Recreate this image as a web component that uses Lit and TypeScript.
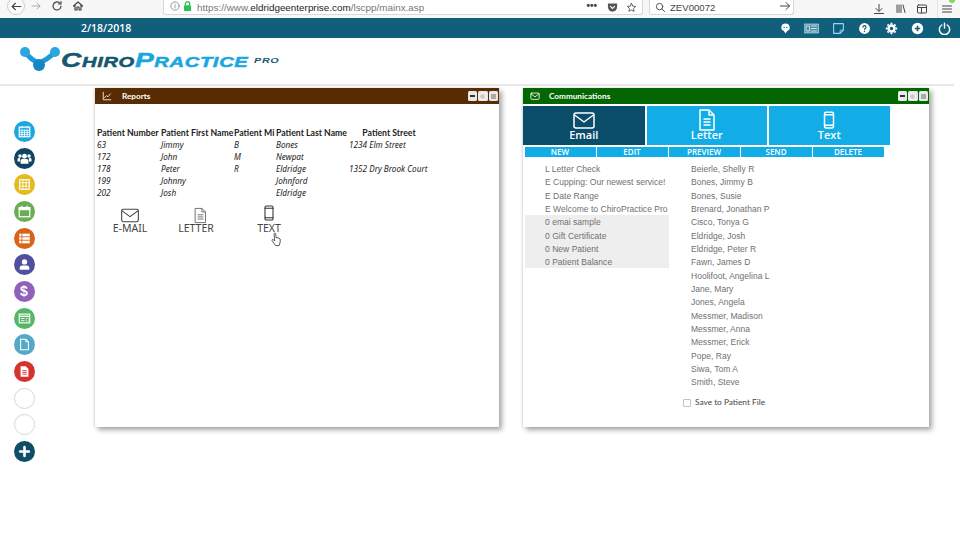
import { LitElement, html, css, svg } from "lit";
import { customElement } from "lit/decorators.js";

const ic = (body: unknown, size = 16, sw = 2) => html`<svg width=${size} height=${size} viewBox="0 0 24 24" fill="none" stroke="currentColor" stroke-width=${sw} stroke-linecap="round" stroke-linejoin="round">${body}</svg>`;

const mail = svg`<rect x="2" y="5" width="20" height="15" rx="2"/><path d="M2.500 7l9.500 7 9.500-7"/>`;
const doc = svg`<path d="M5 2h9l5 5v15H5z"/><path d="M14 2v5h5M8.500 11h7M8.500 14h7M8.500 17h7"/>`;
const phone = svg`<rect x="6" y="1.500" width="12" height="21" rx="2"/><path d="M6 5h12M6 19h12"/>`;

const sideIcons = [
  { c: "#1ba7dd", i: svg`<rect x="6" y="7" width="12" height="11" fill="none" stroke="#fff" stroke-width="1.400"/><path d="M6 10.500h12M6 13h12M6 15.500h12M9 10v8M12 10v8M15 10v8M9 5.500v3M15 5.500v3" stroke="#fff" stroke-width="1"/>` },
  { c: "#0f4560", i: svg`<circle cx="12" cy="9.500" r="2.800" fill="#fff"/><circle cx="6.800" cy="9" r="2" fill="#fff"/><circle cx="17.200" cy="9" r="2" fill="#fff"/><path d="M7.500 18v-3.500q0-2 2-2h5q2 0 2 2V18z" fill="#fff"/><path d="M4 15.500v-2.500q0-1.500 1.500-1.500H7v4zM20 15.500v-2.500q0-1.500-1.500-1.500H17v4z" fill="#fff"/>` },
  { c: "#e6b91f", i: svg`<rect x="6.500" y="6.500" width="11" height="11" fill="none" stroke="#fff" stroke-width="1.300"/><path d="M6.500 10h11M6.500 13.800h11M10.200 6.500v11M13.800 6.500v11" stroke="#fff" stroke-width="1"/>` },
  { c: "#69ad55", i: svg`<rect x="6" y="7.500" width="12" height="10.500" fill="none" stroke="#fff" stroke-width="1.400"/><path d="M6 8h12v2H6zM9 5.500v3M15 5.500v3" stroke="#fff" stroke-width="1.400" fill="#fff"/>` },
  { c: "#d9631b", i: svg`<rect x="6" y="6.500" width="12" height="11" fill="#fff"/><path d="M6 10h12M6 14h12M9 6.500v11" stroke="#d9631b" stroke-width="1"/>` },
  { c: "#514f9f", i: svg`<circle cx="12" cy="9" r="3" fill="#fff"/><path d="M6.500 18v-2q0-3 3-3h5q3 0 3 3v2z" fill="#fff"/>` },
  { c: "#8f61b8", t: "$" },
  { c: "#55b668", i: svg`<rect x="6" y="7" width="12" height="10" fill="none" stroke="#fff" stroke-width="1.300"/><path d="M6 9.500h12" stroke="#fff" stroke-width="1.500"/><path d="M8 12h4M8 14.500h4M14 12h2v3h-2z" stroke="#fff" stroke-width="1"/>` },
  { c: "#55a9c8", i: svg`<path d="M7.500 6h6l3 3v9h-9z" fill="none" stroke="#fff" stroke-width="1.300"/><path d="M13.500 6v3h3" stroke="#fff" stroke-width="1" fill="none"/>` },
  { c: "#d4332e", i: svg`<path d="M7.500 6h6l3 3v9h-9z" fill="#fff"/><path d="M9.500 11h5M9.500 13h5M9.500 15h5" stroke="#d4332e" stroke-width="1"/>` },
  { c: "", i: null },
  { c: "", i: null },
  { c: "#0f4d68", i: svg`<path d="M12 7v10M7 12h10" stroke="#fff" stroke-width="3" stroke-linecap="round"/>` },
];

const topIcons = [
  { s: 13, b: svg`<path d="M12 3a7.500 7 0 0 1 3 13.500L12 21l-3-4.500A7.500 7 0 0 1 12 3z" fill="#fff" stroke="none"/><circle cx="9.500" cy="10" r="1.300" fill="#125f7c" stroke="none"/><circle cx="14.500" cy="10" r="1.300" fill="#125f7c" stroke="none"/>` },
  { s: 15, b: svg`<rect x="1" y="5" width="22" height="14" stroke="#b5dce8" stroke-width="1.500" fill="#4d8aa1"/><path d="M4 8h5v8H4zM12 8h8M12 12h8M12 16h8" stroke="#d5ecf3" stroke-width="1.500"/>` },
  { s: 13, b: svg`<path d="M3 3h18v12l-6 6H3z" stroke="#8fdcf2" stroke-width="2"/><path d="M15 21v-6h6" stroke="#8fdcf2" stroke-width="1.500"/>` },
  { s: 13, b: svg`<circle cx="12" cy="12" r="10" fill="#fff" stroke="none"/><path d="M9.200 9.500a2.800 2.800 0 1 1 4.200 2.500c-1 .6-1.400 1-1.400 2" stroke="#125f7c" stroke-width="2.200"/><circle cx="12" cy="17.500" r="1.300" fill="#125f7c" stroke="none"/>` },
  { s: 13, b: svg`<path d="M12 6.500a5.500 5.500 0 1 0 0 11 5.500 5.500 0 0 0 0-11z" stroke="#fff" stroke-width="4.500"/><path d="M12 1.500v3M12 19.500v3M1.500 12h3M19.500 12h3M4.600 4.600l2.100 2.100M17.300 17.300l2.100 2.100M4.600 19.400l2.100-2.100M17.300 6.700l2.100-2.100" stroke="#fff" stroke-width="3.500" stroke-linecap="butt"/>` },
  { s: 13, b: svg`<circle cx="12" cy="12" r="10.500" fill="#fff" stroke="none"/><path d="M12 7v10M7 12h10" stroke="#125f7c" stroke-width="3" stroke-linecap="butt"/>` },
  { s: 13, b: svg`<path d="M7 5.500a9.500 9.500 0 1 0 10 0M12 2v9" stroke="#fff" stroke-width="2.600"/>` },
];

const rows = [
  ["63", "Jimmy", "B", "Bones", "1234 Elm Street"],
  ["172", "John", "M", "Newpat", ""],
  ["178", "Peter", "R", "Eldridge", "1352 Dry Brook Court"],
  ["199", "Johnny", "", "Johnford", ""],
  ["202", "Josh", "", "Eldridge", ""],
];
const templates = ["L Letter Check", "E Cupping: Our newest service!", "E Date Range", "E Welcome to ChiroPractice Pro"];
const shaded = ["0 emai sample", "0 Gift Certificate", "0 New Patient", "0 Patient Balance"];
const people = ["Beierle, Shelly R", "Bones, Jimmy B", "Bones, Susie", "Brenard, Jonathan P", "Cisco, Tonya G", "Eldridge, Josh", "Eldridge, Peter R", "Fawn, James D", "Hoolifoot, Angelina L", "Jane, Mary", "Jones, Angela", "Messmer, Madison", "Messmer, Anna", "Messmer, Erick", "Pope, Ray", "Siwa, Tom A", "Smith, Steve"];

@customElement("app-root")
export class AppRoot extends LitElement {
  static styles = css`
    :host { display: block; width: 960px; height: 540px; overflow: hidden; background: #fff; font-family: "Open Sans", sans-serif; color: #222; }
    * { box-sizing: border-box; }
    .chrome { height: 18px; background: #f7f7f7; display: flex; align-items: flex-end; color: #444; overflow: hidden; }
    .nav { width: 163px; height: 18px; display: flex; align-items: center; flex: none; padding-left: 7px; }
    .back { width: 18px; height: 18px; border-radius: 50%; border: 1px solid #cfcfcf; background: #fbfbfb; display: flex; align-items: center; justify-content: center; margin-top: -6px; }
    .nav svg { display: block; }
    .nav .fwd { margin-left: 5px; color: #aaa; margin-top: -7px; }
    .nav .rl { margin-left: 9px; margin-top: -7px; }
    .nav .hm { margin-left: 9px; margin-top: -7px; }
    .url { width: 480px; height: 15px; background: #fff; border: 1px solid #d8d8d8; border-top: 0; border-radius: 0 0 3px 3px; display: flex; align-items: center; font-family: "Liberation Sans", sans-serif; font-size: 9.900px; color: #777; flex: none; margin-bottom: 3px; padding-left: 6px; }
    .url b { font-weight: 400; color: #222; }
    .url .lock { margin: 0 5px 0 3px; color: #27c24c; }
    .url .info { color: #888; }
    .url .tools { margin-left: auto; display: flex; align-items: center; gap: 8px; padding-right: 5px; color: #555; }
    .dots { font-weight: 700; font-size: 10px; color: #444; margin-right: 2px; line-height: 10px; margin-top: -3px; }
    .search { width: 145px; height: 15px; margin: 0 0 3px 6px; background: #fff; border: 1px solid #d8d8d8; border-top: 0; border-radius: 0 0 3px 3px; display: flex; align-items: center; font-family: "Liberation Sans", sans-serif; font-size: 9.600px; color: #444; padding: 0 2px 0 5px; gap: 4px; flex: none; }
    .search .arr { margin-left: auto; color: #444; }
    .right { display: flex; align-items: center; height: 18px; margin-left: 79px; gap: 9.500px; color: #444; margin-top: -8px; flex: none; }
    .sep { width: 1px; height: 18px; background: #e3e3e3; margin-left: -1px; }
    .burger { position: relative; margin-left: -6px; }
    .burger::after { content: ""; position: absolute; right: -2px; top: -1px; width: 6px; height: 6px; border-radius: 50%; background: #7ed957; }
    .bar { height: 20px; background: #125f7c; color: #fff; display: flex; align-items: center; padding-left: 81px; font-size: 10.500px; font-weight: 600; }
    .bar .date { width: 691px; flex: none; }
    .bar .icons { display: flex; align-items: center; }
    .bar .slot { width: 26.500px; display: flex; justify-content: center; flex: none; }
    .head { height: 48px; display: flex; align-items: center; padding: 0 0 3px 19px; border-bottom: 2px solid #e8e8e8; margin-right: 6px; }
    .word { font-family: "Liberation Sans", sans-serif; font-weight: 700; font-style: italic; font-size: 21px; line-height: 24px; letter-spacing: 0.500px; font-variant: small-caps; -webkit-text-stroke: 0.500px currentColor; transform: scaleX(1.340); transform-origin: left center; width: 186px; flex: none; }
    .word .a { color: #15576f; }
    .word .b { color: #1aa7e0; }
    .pro { font-family: "Liberation Sans", sans-serif; font-weight: 700; font-style: italic; font-size: 8px; color: #15576f; letter-spacing: .5px; transform: scaleX(1.350); transform-origin: left center; margin-left: 7px; margin-top: 2px; }
    .main { display: grid; grid-template-columns: 95px 404px 24px 406px; height: 454px; padding-top: 2px; }
    .side { display: flex; flex-direction: column; padding: 33px 0 0 13.500px; gap: 5.670px; }
    .dot { width: 21px; height: 21px; border-radius: 50%; display: flex; align-items: center; justify-content: center; color: #fff; font-weight: 700; font-size: 14px; line-height: 21px; font-family: "Liberation Sans", sans-serif; flex: none; }
    .dot.empty { background: #fff; border: 1px solid #d6d6d6; }
    .win { height: 339px; background: #fff; box-shadow: 3px 3px 5px rgba(0,0,0,.35), -1px 0 2px rgba(0,0,0,.12); display: flex; flex-direction: column; }
    .title { height: 16px; display: flex; align-items: center; color: #fff; font-size: 8.200px; font-weight: 700; padding: 0 1px 0 7px; flex: none; font-family: Lato, sans-serif; }
    .title.brown { background: #5a2c04; }
    .title.green { background: #036603; }
    .title .t { margin-left: 10px; }
    .title.green .t { margin-left: 9px; }
    .ctl { margin-left: auto; display: flex; gap: 1px; }
    .ctl i { width: 9.500px; height: 10px; border-radius: 1.500px; background: #e9e9e9; display: flex; align-items: center; justify-content: center; }
    .ctl i.m::after { content: ""; width: 5px; height: 1.500px; background: #333; }
    .ctl i.r::after { content: ""; width: 5px; height: 5px; border-radius: 50%; border: 1px solid #fff; background: #ccc; }
    .ctl i.x::after { content: ""; width: 5px; height: 5px; background: #aaa; }
    .report { padding: 23px 0 0 2px; font-family: "Noto Sans", sans-serif; }
    table { border-collapse: collapse; table-layout: fixed; width: 332px; font-size: 8.200px; color: #222; }
    th { font-family: Lato, sans-serif; font-size: 8.700px; font-weight: 700; text-align: left; padding: 0; height: 12px; line-height: 12px; white-space: nowrap; }
    th.c { text-align: center; }
    td { font-style: italic; padding: 0; height: 12px; line-height: 12px; white-space: nowrap; }
    .acts { display: grid; grid-template-columns: 66px 66px 80px; margin-top: 8px; color: #444; }
    .act { display: flex; flex-direction: column; align-items: center; font-size: 10.500px; line-height: 12px; position: relative; }
    .box { height: 15px; display: flex; align-items: flex-end; justify-content: center; }
    .box svg { display: block; }
    .box.m svg { margin-bottom: -3px; }
    .box.d { margin-left: 8px; color: #666; }
    .box.d svg { margin-bottom: -2px; }
    .box.p { color: #333; margin-bottom: 1.500px; height: 13.500px; }
    .cursor { position: absolute; left: 42px; top: 25px; }
    .tabs { display: grid; grid-template-columns: 121.500px 120.500px 120.500px; gap: 0 2px; margin-top: 1.500px; height: 39.500px; flex: none; }
    .tab { background: #12ace6; color: #fff; display: flex; flex-direction: column; align-items: center; padding-top: 2px; font-size: 11px; font-weight: 600; line-height: 13px; }
    .tab.on { background: #0a4d6a; }
    .tab svg { display: block; height: 24px; margin-bottom: -4px; flex: none; }
    .subs { display: grid; grid-template-columns: repeat(5, 71px); gap: 0 1px; margin: 1.500px 0 0 1.500px; flex: none; }
    .sub { background: #12ace6; color: #fff; height: 10px; font-size: 8px; line-height: 10px; text-align: center; font-weight: 600; }
    .lists { display: grid; grid-template-columns: 168px 1fr; padding-top: 6.500px; font-family: "Liberation Sans", sans-serif; letter-spacing: .03px; font-size: 8.500px; color: #707070; line-height: 13.330px; }
    .tpl { padding-left: 2px; }
    .tpl div { height: 13.330px; white-space: nowrap; }
    .tpl .row { padding-left: 20px; }
    .tpl .shade { background: #eeeeee; width: 143.500px; height: 52.500px; margin-top: -1.300px; padding-top: 1.300px; }
    .ppl div { height: 13.330px; white-space: nowrap; }
    .ppl .save { display: flex; align-items: center; gap: 4px; margin-top: 6.500px; color: #444; height: 14px; letter-spacing: 0; font-family: Lato, sans-serif; font-size: 8.300px; }
    .check { width: 8px; height: 8px; border: 1px solid #c4c4c4; border-radius: 1px; background: #fff; margin-left: -8px; }
  `;

  render() {
    return html`
      <div class="chrome">
        <div class="nav">
          <span class="back">${ic(svg`<path d="M20 12H4M10 6l-6 6 6 6"/>`, 13)}</span>
          <span class="fwd">${ic(svg`<path d="M4 12h16M14 6l6 6-6 6"/>`, 12)}</span>
          <span class="rl">${ic(svg`<path d="M20 12a8 8 0 1 1-3-6.300M20 3v5h-5"/>`, 12, 2.400)}</span>
          <span class="hm">${ic(svg`<path d="M3 12l9-8 9 8M6 10v10h4v-6h4v6h4V10"/>`, 12, 2.400)}</span>
        </div>
        <div class="url">
          <span class="info">${ic(svg`<circle cx="12" cy="12" r="10"/><path d="M12 11v6M12 7v.5"/>`, 10)}</span>
          <span class="lock"><svg width="9" height="10" viewBox="0 0 12 14"><path d="M3 6V4a3 3 0 0 1 6 0v2" fill="none" stroke="currentColor" stroke-width="1.800"/><rect x="1" y="6" width="10" height="8" rx="1" fill="currentColor"/></svg></span>
          <span>https://www.<b>eldridgeenterprise.com</b>/lscpp/mainx.asp</span>
          <span class="tools">
            <span class="dots">•••</span>
            <svg width="11" height="11" viewBox="0 0 12 12"><path d="M1 1.500h10v4a5 5 0 0 1-10 0z" fill="#555"/><path d="M3.500 4.500L6 7l2.500-2.500" stroke="#fff" stroke-width="1.300" fill="none"/></svg>
            ${ic(svg`<path d="M12 3l2.800 5.900 6.200.8-4.500 4.400 1.100 6.400-5.600-3.100-5.600 3.100 1.100-6.400L3 9.700l6.200-.8z"/>`, 11)}
          </span>
        </div>
        <div class="search">
          ${ic(svg`<circle cx="10" cy="10" r="7"/><path d="M15 15l6 6"/>`, 11)}
          <span>ZEV00072</span>
          <span class="arr">${ic(svg`<path d="M3 12h18M14 5l7 7-7 7"/>`, 12)}</span>
        </div>
        <div class="right">
          ${ic(svg`<path d="M12 3v13M6 11l6 6 6-6M3 21h18"/>`, 12)}
          ${ic(svg`<path d="M4 4v15M8 4v15M12 4v15M16 4l4 15"/>`, 12)}
          ${ic(svg`<rect x="3" y="4" width="18" height="16" rx="2"/><path d="M3 9h18M11 9v11"/>`, 12)}
          <span class="sep"></span>
          <span class="burger">${ic(svg`<path d="M3 6h18M3 12h18M3 18h18"/>`, 12)}</span>
        </div>
      </div>
      <div class="bar">
        <span class="date">2/18/2018</span>
        <span class="icons">${topIcons.map((t) => html`<span class="slot">${ic(t.b, t.s)}</span>`)}</span>
      </div>
      <div class="head">
        <svg width="42" height="28" viewBox="0 0 42 28" style="flex:none">
          <path d="M6 6 Q12 14 20 17 Q28 14 36 6" fill="none" stroke="#1b9cd8" stroke-width="5"/>
          <circle cx="6" cy="6" r="5" fill="#2aa7de"/><circle cx="36" cy="6" r="5" fill="#2aa7de"/><circle cx="20" cy="19" r="6" fill="#1585c4"/>
        </svg>
        <span class="word"><span class="a">Chiro</span><span class="b">Practice</span></span>
        <span class="pro">PRO</span>
      </div>
      <div class="main">
        <div class="side">
          ${sideIcons.map((s: any) => s.c
            ? html`<div class="dot" style="background:${s.c}">${s.t ? s.t : html`<svg width="21" height="21" viewBox="0 0 24 24">${s.i}</svg>`}</div>`
            : html`<div class="dot empty"></div>`)}
        </div>
        <section class="win">
          <div class="title brown">
            ${ic(svg`<path d="M3 3v18h18M6 16l5-5 3 3 6-7"/>`, 10)}
            <span class="t">Reports</span>
            <span class="ctl"><i class="m"></i><i class="r"></i><i class="x"></i></span>
          </div>
          <div class="report">
            <table>
              <colgroup><col style="width:64px"><col style="width:73px"><col style="width:42px"><col style="width:73px"><col style="width:80px"></colgroup>
              <tr><th>Patient Number</th><th>Patient First Name</th><th>Patient Mi</th><th>Patient Last Name</th><th class="c">Patient Street</th></tr>
              ${rows.map((r) => html`<tr>${r.map((c) => html`<td>${c}</td>`)}</tr>`)}
            </table>
            <div class="acts">
              <div class="act"><span class="box m">${ic(mail, 20, 1.300)}</span>E-MAIL</div>
              <div class="act"><span class="box d">${ic(doc, 17, 1.300)}</span>LETTER</div>
              <div class="act"><span class="box p">${ic(phone, 16, 1.600)}</span>TEXT
                <span class="cursor"><svg width="12" height="14" viewBox="0 0 12 14"><path d="M3 1.500c.8-.8 1.600-.3 1.700.5l.5 4 .8-.5 1 .3 1 .4 1.200.8v3l-1 3.500H4.500L1 8.500c-.4-.8.6-1.500 1.400-.8l1.300 1.300z" fill="#fff" stroke="#333" stroke-width=".8"/></svg></span>
              </div>
            </div>
          </div>
        </section>
        <div></div>
        <section class="win">
          <div class="title green">
            ${ic(mail, 10)}
            <span class="t">Communications</span>
            <span class="ctl"><i class="m"></i><i class="r"></i><i class="x"></i></span>
          </div>
          <div class="tabs">
            <div class="tab on"><svg width="24" height="24" viewBox="0 0 24 24" fill="none" stroke="#fff" stroke-width="1.500" stroke-linejoin="round">${mail}</svg>Email</div>
            <div class="tab"><svg width="24" height="24" viewBox="0 0 24 24" fill="none" stroke="#fff" stroke-width="1.500" stroke-linejoin="round">${doc}</svg>Letter</div>
            <div class="tab"><svg width="18" height="24" viewBox="0 0 24 24" fill="none" stroke="#fff" stroke-width="2" stroke-linejoin="round">${phone}</svg>Text</div>
          </div>
          <div class="subs">
            ${["NEW", "EDIT", "PREVIEW", "SEND", "DELETE"].map((s) => html`<div class="sub">${s}</div>`)}
          </div>
          <div class="lists">
            <div class="tpl">
              ${templates.map((t) => html`<div class="row">${t}</div>`)}
              <div class="shade">${shaded.map((t) => html`<div class="row">${t}</div>`)}</div>
            </div>
            <div class="ppl">
              ${people.map((p) => html`<div>${p}</div>`)}
              <div class="save"><span class="check"></span>Save to Patient File</div>
            </div>
          </div>
        </section>
      </div>
    `;
  }
}
